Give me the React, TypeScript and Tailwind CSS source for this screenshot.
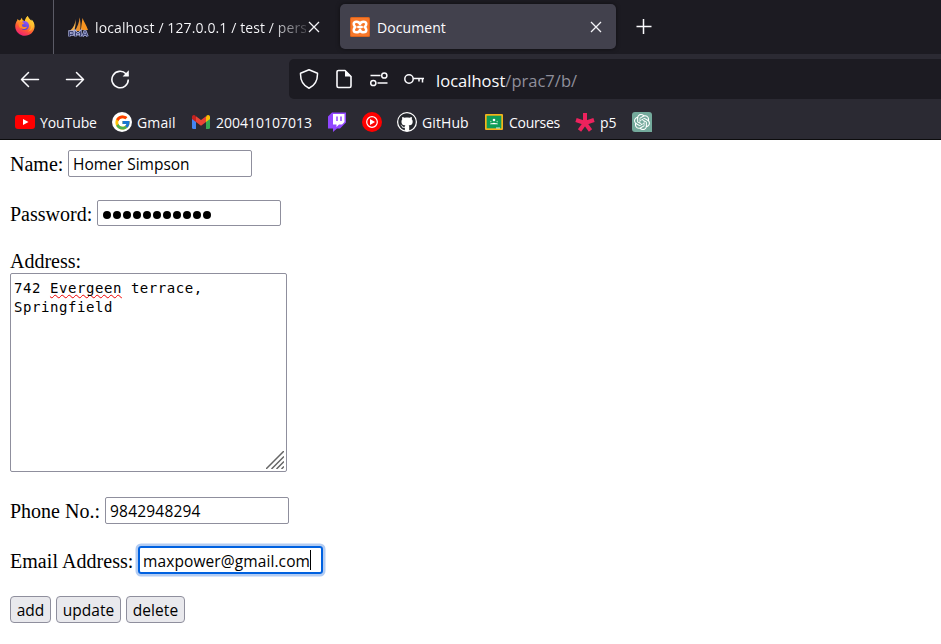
import type { ReactNode } from "react";
import { FcGoogle } from "react-icons/fc";
import { FaGithub } from "react-icons/fa";
import { SiOpenai } from "react-icons/si";

function FirefoxLogo() {
  return (
    <svg className="h-5 w-5" viewBox="0 0 20 20">
      <defs>
        <linearGradient id="fox" x1="0.8" y1="0" x2="0.3" y2="1">
          <stop offset="0" stopColor="#fff04a" />
          <stop offset="0.35" stopColor="#ffb52b" />
          <stop offset="0.65" stopColor="#ff5b32" />
          <stop offset="1" stopColor="#ee1c78" />
        </linearGradient>
        <linearGradient id="globe" x1="0.7" y1="0" x2="0.3" y2="1">
          <stop offset="0" stopColor="#9059ff" />
          <stop offset="1" stopColor="#4b3fc4" />
        </linearGradient>
      </defs>
      <path fill="url(#fox)" d="M12.8 0c.3 1.8 1.6 2.7 2.7 3.9l.9.9.3-1.4c1.7 1.6 3 4.300 2.900 7.100-.3 5.300-4.500 9.300-9.700 9.300S.2 15.600.2 10.200c0-2.500 1-4.400 2-5.700L2.400 3l1.800 1.400 1.400-.6L6.800 1.700l.9 2.600 2.200.7C10.500 3 11.200 1.200 12.800 0Z" />
      <circle cx="9.600" cy="9.600" r="4.500" fill="url(#globe)" />
      <path fill="#ff8a2a" d="M3.900 6.500c1.900-1 3.800-.6 5.500.9-1.200.1-1.700.6-2.300 1.200-.5 1.600.5 2.600 2.100 2.500 1.200 0 1.900-.8 3-.3-.8 2.200-4.100 3.100-6.500 1.500C3.700 11 3.200 8.600 3.900 6.500Z" />
      <path fill="#ffc331" d="M10 5c2.700.2 4.800 2.200 4.900 5 .7-.7.900-1.300 1-2 .9 3.700-.6 6.400-3.200 7.500 4.300-.4 6.600-4.600 5-8.500-1-2.300-3.700-3.700-4.900-7C10.600 1.700 10 4 10 5Z" opacity=".75" />
    </svg>
  );
}

function PmaLogo() {
  return (
    <svg className="h-5 w-[21px]" viewBox="0 0 21 20">
      <path d="M7.500 2C7.500 6 5.500 11 1.500 14H6C7.500 10 8 6 7.500 2Z" fill="#f5b04c" />
      <path d="M11.500.3C11.500 5 9.500 10 6.800 14H12C13 9.500 12.500 4 11.500.3Z" fill="#e8902f" />
      <path d="M14.500 1c-.8 4-1 8-1.700 12H20C18.500 8.500 16 5 14.500 1Z" fill="#f79420" />
      <path d="M1.500 19.500v-5H5v3H1.500m6 2v-5L10 17.300l2.500-2.800v5m2.200 0 1.800-5h1l2 5m-4-1.800h3.500" fill="none" stroke="#aab0dd" strokeWidth="2.400" />
      <path d="M1.500 19.500v-5H5v3H1.500m6 2v-5L10 17.300l2.500-2.800v5m2.200 0 1.800-5h1l2 5m-4-1.800h3.500" fill="none" stroke="#3c4270" strokeWidth="1" />
    </svg>
  );
}

function XamppLogo() {
  return (
    <svg className="h-5 w-5" viewBox="0 0 20 20">
      <rect width="20" height="20" rx="1.500" fill="#dc641b" />
      <rect x="1" y="1" width="18" height="18" rx="1" fill="#f8782a" />
      <g fill="none" stroke="#fff" strokeWidth="2.500" strokeLinejoin="round" strokeLinecap="round">
        <path d="M10 7.200C9.500 5.500 8.500 4.700 6.500 4.700 4.700 4.700 3.700 5.600 3.700 7c0 1.300.5 2.100 1.700 3-1.200.9-1.700 1.700-1.700 3 0 1.400 1 2.300 2.800 2.300 2 0 3-.8 3.500-2.500.5 1.700 1.500 2.500 3.500 2.500 1.800 0 2.800-.9 2.800-2.300 0-1.300-.5-2.100-1.700-3 1.200-.9 1.700-1.700 1.700-3 0-1.400-1-2.300-2.800-2.300-2 0-3 .8-3.500 2.500Z" />
        <path d="M8.300 10h3.400" />
      </g>
    </svg>
  );
}

function CloseIcon() {
  return (
    <svg className="h-3 w-3 shrink-0" viewBox="0 0 12 12">
      <path d="m1 1 10 10M11 1 1 11" stroke="#f4f4f8" strokeWidth="1.300" />
    </svg>
  );
}

function TabBar() {
  return (
    <div className="flex h-[54px] shrink-0 bg-[#1c1b22] text-[#fbfbfe]">
      <div className="flex w-[54px] shrink-0 border-r border-[#5b5b66] pt-4 pl-[15px]"><FirefoxLogo /></div>
      <div className="flex w-[286px] shrink-0 items-center pl-[14px]">
        <PmaLogo />
        <div className="ml-1.5 w-[211px] overflow-hidden bg-linear-to-r from-[#fbfbfe] from-83% to-[#1c1b22] to-105% bg-clip-text text-[14px] tracking-[0.11px] whitespace-nowrap text-transparent">localhost / 127.0.0.1 / test / pers</div>
        <div className="ml-0.5"><CloseIcon /></div>
      </div>
      <div className="mt-1 flex h-[45px] w-[276px] shrink-0 items-center rounded-[5px] bg-[#42414d] pr-[14px] pl-[10px] shadow-[0_0_4px_rgba(0,0,0,0.5)]">
        <XamppLogo />
        <span className="ml-[7px] flex-1 pt-0.5 text-[14px] tracking-[0.08px]">Document</span>
        <CloseIcon />
      </div>
      <svg className="mt-[19px] ml-5 h-4 w-4" viewBox="0 0 16 16"><path d="M.5 7.500h15M7.500 0v15" stroke="#fbfbfe" strokeWidth="1.500" /></svg>
    </div>
  );
}

function NavigationBar() {
  return (
    <div className="flex h-[50px] shrink-0 items-center">
      <svg className="ml-5 h-5 w-5" viewBox="0 0 20 20" fill="none" stroke="#fbfbfe" strokeWidth="1.500" strokeLinecap="round" strokeLinejoin="round"><path d="M18.500 10.500h-17m7-7-7 7 7 7" /></svg>
      <svg className="ml-[25px] h-5 w-5" viewBox="0 0 20 20" fill="none" stroke="#fbfbfe" strokeWidth="1.500" strokeLinecap="round" strokeLinejoin="round"><path d="M1.500 10.500h17m-7-7 7 7-7 7" /></svg>
      <svg className="ml-[25px] h-5 w-5" viewBox="0 0 20 20"><path d="M18.300 10.500A8.200 8.200 0 1 1 16 4.800l2 2" fill="none" stroke="#fbfbfe" strokeWidth="1.600" /><path d="M18.800 1.200v6.200h-6.200Z" fill="#fbfbfe" /></svg>
      <div className="ml-[159px] flex h-10 flex-1 items-center rounded-l-[5px] bg-[#1c1b22] pl-[10px]">
        <svg className="h-5 w-5" viewBox="0 0 20 20" fill="none" stroke="#fbfbfe" strokeWidth="1.500" strokeLinejoin="round"><path d="M10 .8 1.500 4.200C1.300 11 4 16.500 10 19.200c6-2.700 8.700-8.200 8.500-15Z" /></svg>
        <svg className="ml-[15px] h-5 w-5" viewBox="0 0 20 20"><path d="M11 1.500H4.500a1.500 1.500 0 0 0-1.500 1.500v14a1.500 1.500 0 0 0 1.500 1.500h11A1.500 1.500 0 0 0 17 17V7.500Z" fill="none" stroke="#fbfbfe" strokeWidth="1.600" strokeLinejoin="round" /><path d="M11 1v6.500h6.500Z" fill="#fbfbfe" /></svg>
        <svg className="ml-[15px] h-5 w-5" viewBox="0 0 20 20" fill="none" stroke="#fbfbfe" strokeWidth="1.500"><path d="M1.500 6.500h10m-3 7.500h10" /><circle cx="15.300" cy="6.500" r="2.600" /><circle cx="4.300" cy="14" r="2.600" /></svg>
        <svg className="ml-[15px] h-5 w-5" viewBox="0 0 20 20" fill="none" stroke="#fbfbfe" strokeWidth="1.500"><circle cx="5" cy="10" r="4.200" /><path d="M9.200 9.500H20m-1.500 0v4m-3.500-4v3" /></svg>
        <div className="ml-3 pt-1 text-[16.5px] tracking-[0.02px]"><span>localhost</span><span className="text-[#8f8f9b]">/prac7/b/</span></div>
      </div>
    </div>
  );
}

function Bookmark({ icon, label, className }: { icon: ReactNode; label?: string; className: string }) {
  return <div className={`flex items-center gap-[5px] whitespace-nowrap ${className}`}>{icon}{label && <span>{label}</span>}</div>;
}

function Bookmarks() {
  return (
    <div className="flex h-[35px] shrink-0 items-center border-b border-[#0c0c0d] pl-[15px] text-[14px]">
      <Bookmark className="w-[97px] tracking-[-0.1px]" label="YouTube" icon={<svg className="h-5 w-5 shrink-0" viewBox="0 0 20 20"><rect y="3" width="20" height="14" rx="3" fill="#f00" /><path d="m8 7 5.500 3L8 13Z" fill="#fff" /></svg>} />
      <Bookmark className="w-[79px] tracking-[0.15px]" label="Gmail" icon={<span className="flex h-5 w-5 shrink-0 items-center justify-center rounded-full bg-white"><FcGoogle className="h-[17px] w-[17px]" /></span>} />
      <Bookmark className="w-[136px]" label="200410107013" icon={<svg className="h-5 w-5 shrink-0" viewBox="0 0 20 20"><path fill="#4285f4" d="M1 5v10.500A1.500 1.500 0 0 0 2.500 17H5V8Z" /><path fill="#34a853" d="M15 8v9h2.500a1.500 1.500 0 0 0 1.500-1.500V5Z" /><path fill="#fbbc04" d="M15 5v5l4-3V5c0-2-2-2.700-3.300-1.500Z" /><path fill="#c5221f" d="M1 5v2l4 3V5l-.7-1.500C3 2.300 1 3 1 5Z" /><path fill="#ea4335" d="M5 4.200 10 8l5-3.800V10l-5 3.800L5 10Z" /></svg>} />
      <Bookmark className="w-[35px]" icon={<svg className="h-5 w-5" viewBox="0 0 20 20"><path fill="#9146ff" d="M5 .5 1 4.500v12h5V20l4-3.500h3l6-6V.5Z" /><path fill="#fff" d="M6 2h11.500v8L15 12.500h-3L9.500 15v-2.500H6Z" /><path d="M10 4.500V9m4-4.500V9" stroke="#9146ff" strokeWidth="1.500" /></svg>} />
      <Bookmark className="w-[35px]" icon={<svg className="h-5 w-5" viewBox="0 0 20 20"><circle cx="10" cy="10" r="10" fill="#f00" /><circle cx="10" cy="10" r="5.300" fill="none" stroke="#fff" strokeWidth="1.200" /><path d="m8 7 5 3-5 3Z" fill="#fff" /></svg>} />
      <Bookmark className="w-[87px] tracking-[0.1px]" label="GitHub" icon={<span className="flex h-5 w-5 shrink-0 items-center justify-center rounded-full bg-white"><FaGithub className="h-[18px] w-[18px] text-[#24262c]" /></span>} />
      <Bookmark className="w-[91px] tracking-[-0.25px]" label="Courses" icon={<svg className="h-5 w-5 shrink-0" viewBox="0 0 20 20"><rect x="1" y="2" width="18" height="16" rx="1" fill="#f4b41a" /><rect x="2.700" y="3.700" width="14.600" height="12.600" fill="#0f9d58" /><circle cx="10" cy="8" r="1.300" fill="#fff" /><circle cx="6.800" cy="9.600" r=".8" fill="#8fd0ae" /><circle cx="13.200" cy="9.600" r=".8" fill="#8fd0ae" /><path d="M6 12.300c.4-1.300 1.400-1.300 2.200-1 .8-.8 2.800-.8 3.600 0 .8-.3 1.800-.3 2.200 1Z" fill="#fff" /><path d="M12 16h4" stroke="#dceee4" /></svg>} />
      <Bookmark className="w-[57px]" label="p5" icon={<svg className="h-5 w-5 shrink-0" viewBox="0 0 20 20"><path d="M10 11V1m0 10 9-3m-9 3 5.500 7.500M10 11l-5.500 7.500M10 11 1 8" stroke="#ed225d" strokeWidth="4" /></svg>} />
      <Bookmark className="w-5" icon={<span className="flex h-5 w-5 items-center justify-center rounded-t-[3px] rounded-bl-[3px] bg-[#74aa9c]"><SiOpenai className="h-4 w-4 text-white" /></span>} />
    </div>
  );
}

const field = "w-[184px] rounded-[2px] border border-[#8f8f9d] bg-white pl-1 font-['Open_Sans','Noto_Sans',sans-serif] text-[15.5px] text-black outline-none";
const action = "h-[27px] rounded-[4px] border border-[#8f8f9d] bg-[#e9e9ed] pt-px text-center font-['Open_Sans','Noto_Sans',sans-serif] text-[15.5px] leading-[25px] tracking-[0.05px]";

function PersonForm() {
  return (
    <main className="flex flex-1 flex-col pt-[10px] pl-[10px] font-['Liberation_Serif','Times_New_Roman',serif] text-[20px] text-black">
      <div className="flex h-[27px] items-center"><label className="w-[58px]">Name:</label><div className={`${field} h-[27px] leading-[26px]`}>Homer Simpson</div></div>
      <div className="mt-[23px] flex h-[26px] items-center"><label className="w-[87px] pt-px">Password:</label>
        <div className={`${field} flex h-[26px] items-center gap-[2px] pt-1 pl-[5px]`}>{Array.from({ length: 11 }, (_, i) => <span key={i} className="h-2 w-2 rounded-full bg-black" />)}</div>
      </div>
      <label className="mt-6 h-[23px] leading-[23px]">Address:</label>
      <div className="relative h-[199px] w-[277px] rounded-[2px] border border-[#8f8f9d] pt-[5px] pl-[3px] font-['DejaVu_Sans_Mono',monospace] text-[14px] leading-[19px] tracking-[0.56px]">
        <div>742 <span className="underline decoration-[#e00] decoration-wavy decoration-1 underline-offset-1 [text-decoration-skip-ink:none]">Evergeen</span> terrace,</div>
        <div>Springfield</div>
        <svg className="absolute right-0.5 bottom-0.5 h-[18px] w-[18px]" viewBox="0 0 18 18"><path d="M0 18 18 0M5.500 18 18 5.500M10.500 18l7.500-7.500M15.500 18l2.500-2.500" stroke="#666" strokeWidth="1.500" /></svg>
      </div>
      <div className="mt-[25px] flex h-[27px] items-center"><label className="w-[95px]">Phone No.:</label><div className={`${field} h-[27px] leading-[26px] tracking-[0.2px]`}>9842948294</div></div>
      <div className="mt-[22px] flex h-[28px] items-center"><label className="w-[128px] whitespace-nowrap tracking-[0.05px] pt-px">Email Address:</label><div className="flex h-[28px] w-[185px] items-center rounded-[3px] border-2 border-[#0061e0] pl-[3px] font-['Open_Sans','Noto_Sans',sans-serif] text-[15.5px] tracking-[0.1px] ring-[2.5px] ring-[#b3ccf2]"><span className="pt-[3px] whitespace-nowrap">maxpower@gmail.com</span><span className="h-5 w-px bg-black" /></div></div>
      <div className="mt-[22px] flex gap-[5px]"><button className={`${action} w-[41px]`}>add</button><button className={`${action} w-[65px]`}>update</button><button className={`${action} w-[59px]`}>delete</button></div>
    </main>
  );
}

export default function App() {
  return (
    <div className="flex h-[644px] w-[941px] flex-col overflow-hidden bg-white font-['Open_Sans','Noto_Sans',sans-serif]">
      <TabBar />
      <header className="flex h-[86px] shrink-0 flex-col justify-between bg-[#2b2a33] text-[#fbfbfe]"><NavigationBar /><Bookmarks /></header>
      <PersonForm />
    </div>
  );
}
